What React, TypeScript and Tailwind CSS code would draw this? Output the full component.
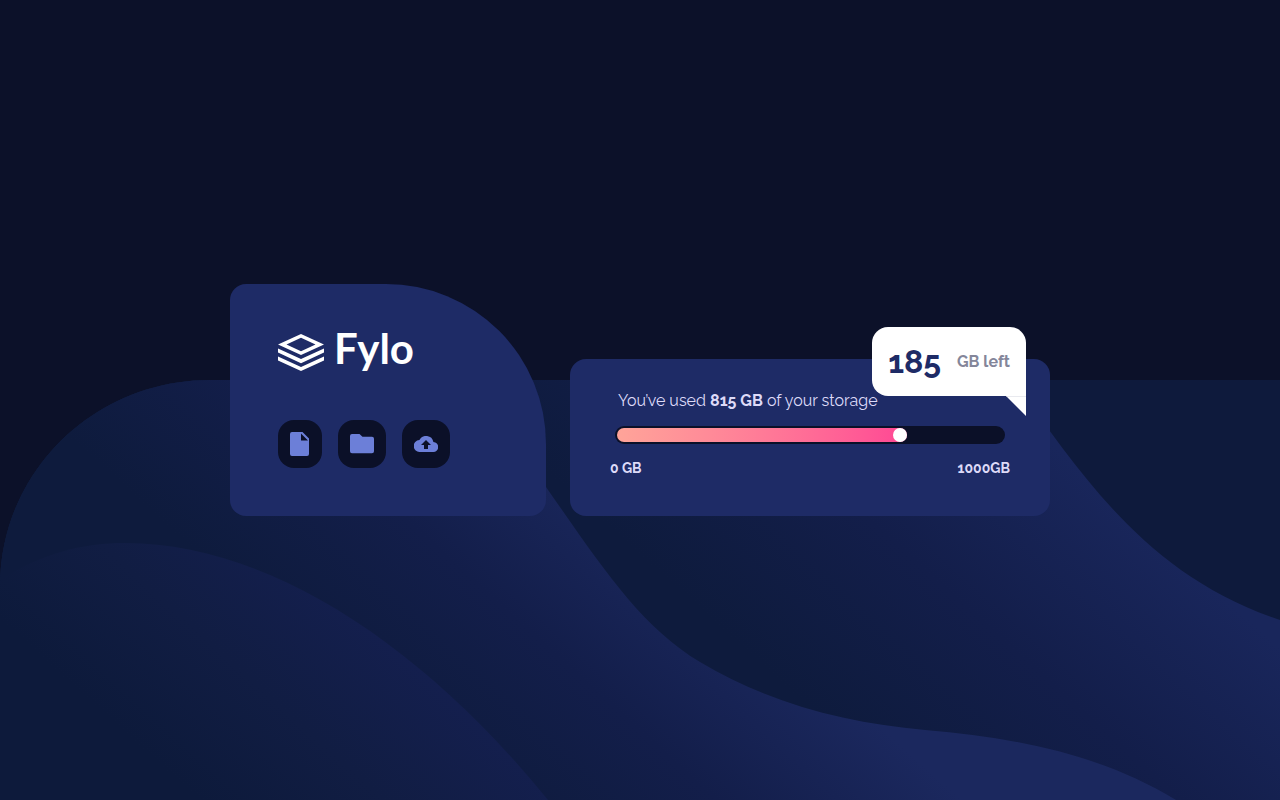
import React from "react";

const USED = 815;
const TOTAL = 1000;

function Waves() {
  return (
    <svg
      className="absolute inset-x-0 bottom-0 h-[420px] w-full"
      viewBox="0 0 1280 420"
      preserveAspectRatio="none"
      aria-hidden="true"
    >
      <defs>
        <linearGradient id="far" gradientUnits="userSpaceOnUse" x1="0" y1="-400" x2="240" y2="-667">
          <stop offset="0" stopColor="#0e1b3d" />
          <stop offset="0.5" stopColor="#131e4a" />
          <stop offset="1" stopColor="#19265b" />
        </linearGradient>
        <linearGradient id="mid" gradientUnits="userSpaceOnUse" x1="0" y1="-5" x2="220" y2="-249">
          <stop offset="0" stopColor="#0e1b3d" />
          <stop offset="0.5" stopColor="#131e4a" />
          <stop offset="1" stopColor="#1b285e" />
        </linearGradient>
        <linearGradient id="near" gradientUnits="userSpaceOnUse" x1="0" y1="240" x2="166" y2="56">
          <stop offset="0" stopColor="#0d1a3b" />
          <stop offset="0.5" stopColor="#111d43" />
          <stop offset="1" stopColor="#141f4e" />
        </linearGradient>
        <clipPath id="edge">
          <path d="M0 420V206C0 92 94 0 210 0H1280V420Z" />
        </clipPath>
      </defs>
      <g clipPath="url(#edge)">
        <rect width="1280" height="420" fill="#0e1a3c" />
        <path d="M0 0H1012C1080 90 1142 194 1280 240V420H0Z" fill="url(#far)" />
        <path
          d="M0 0H440C480 18 515 63 546 107C602 187 640 246 700 282C772 325 848 343 925 350C1020 358 1104 376 1176 420H0Z"
          fill="url(#mid)"
        />
        <path d="M0 200C42 173 83 163 125 163C270 163 424 267 548 420H0Z" fill="url(#near)" />
      </g>
    </svg>
  );
}

function Logo() {
  return (
    <div className="flex h-10 items-center gap-2.5 text-white">
      <svg width="46" height="38" viewBox="0 0 46 38" fill="currentColor" aria-hidden="true">
        <path fillRule="evenodd" d="M23 1 46 11.500 23 22 0 11.500ZM23 4.800 8.500 11.500 23 18.200 37.500 11.500Z" />
        <path d="M0 15.500 23 26 46 15.500V19.500L23 30.200 0 19.500Z" />
        <path d="M0 23.500 23 34 46 23.500V27.500L23 38 0 27.500Z" />
      </svg>
      <span className="pb-2 font-['Lato',sans-serif] text-[42px] leading-8 font-bold">Fylo</span>
    </div>
  );
}

function IconButton({ label, children }: { label: string; children: React.ReactNode }) {
  return (
    <button
      type="button"
      aria-label={label}
      className="flex h-12 items-center rounded-2xl bg-[#0b1028] px-3 text-[#6c7fd8]"
    >
      {children}
    </button>
  );
}

export default function App() {
  return (
    <main className="relative flex min-h-screen items-center justify-center overflow-hidden bg-[#0c1129] font-['Raleway','Lato',sans-serif]">
      <Waves />
      <div className="relative flex w-full max-w-[820px] items-end gap-6">
        <section className="flex flex-1 flex-col gap-12 rounded-2xl rounded-tr-[160px] bg-[#1e2b66] p-12">
          <Logo />
          <div className="flex gap-4">
            <IconButton label="Documents">
              <svg width="20" height="24" viewBox="0 0 20 24" fill="currentColor" aria-hidden="true">
                <path
                  fillRule="evenodd"
                  d="M2 0H12.500L19 6.500V22A2 2 0 0 1 17 24H2A2 2 0 0 1 0 22V2A2 2 0 0 1 2 0ZM11 1.500V8.500H18Z"
                />
              </svg>
            </IconButton>
            <IconButton label="Folders">
              <svg width="24" height="20" viewBox="0 0 24 20" fill="currentColor" aria-hidden="true">
                <path d="M2 0H9.500L12.500 2.700H22A2 2 0 0 1 24 4.700V17.300A2 2 0 0 1 22 19.300H2A2 2 0 0 1 0 17.300V2A2 2 0 0 1 2 0Z" />
              </svg>
            </IconButton>
            <IconButton label="Upload">
              <svg width="24" height="16" viewBox="0 0 24 16" fill="currentColor" aria-hidden="true">
                <path
                  fillRule="evenodd"
                  d="M19.400 6A7.500 7.500 0 0 0 5.400 4 6 6 0 0 0 6 16H19A5 5 0 0 0 19.400 6ZM14 9V13H10V9H7L12 4 17 9Z"
                />
              </svg>
            </IconButton>
          </div>
        </section>

        <section className="relative w-[480px] rounded-2xl bg-[#1e2b66] px-10 pt-[30px] pb-9 text-[#dddaf8]">
          <p className="px-2 text-base leading-6">
            You’ve used <strong className="font-bold">{USED} GB</strong> of your storage
          </p>
          <div
            role="progressbar"
            aria-label="Storage used"
            aria-valuenow={USED}
            aria-valuemin={0}
            aria-valuemax={TOTAL}
            className="mx-[5px] mt-[13px] h-[18px] rounded-full bg-[#0b1028] p-0.5"
          >
            <div className="flex h-full w-3/4 justify-end rounded-full bg-linear-to-r from-[#ffa499] to-[#ff4694]">
              <span className="size-3.5 rounded-full bg-white" />
            </div>
          </div>
          <div className="mt-3 flex justify-between text-sm leading-6 font-bold">
            <span>0 GB</span>
            <span>{TOTAL}GB</span>
          </div>

          <div className="absolute -top-8 right-6 flex h-[69px] items-center gap-4 rounded-2xl rounded-br-none bg-white px-4">
            <span className="text-[32px] leading-10 font-bold text-[#1e2b66]">{TOTAL - USED}</span>
            <span className="text-base leading-6 font-bold text-[#84869a]">GB left</span>
            <svg
              className="absolute top-full right-0"
              width="20"
              height="20"
              viewBox="0 0 20 20"
              aria-hidden="true"
            >
              <path d="M0 0H20V20Z" fill="#fff" />
              <path d="M0 0H20" stroke="#d4d6e0" />
            </svg>
          </div>
        </section>
      </div>
    </main>
  );
}
